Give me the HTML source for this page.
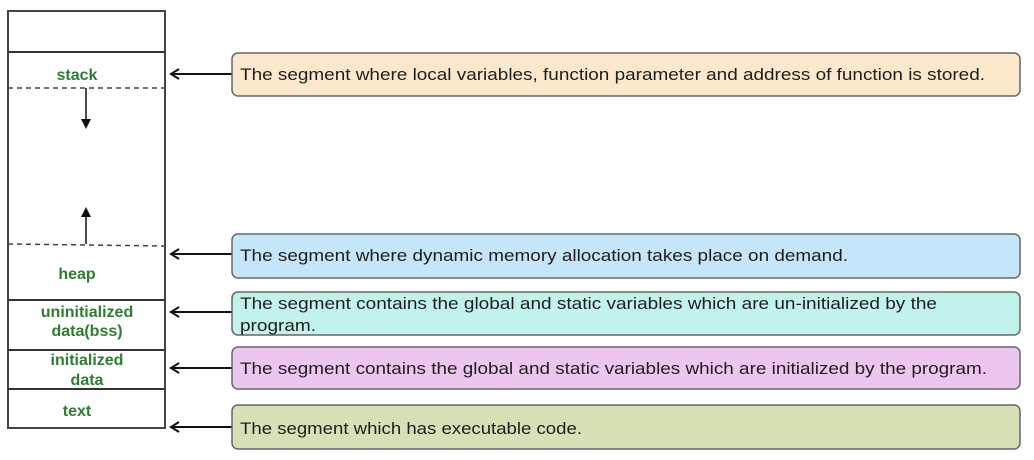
<!DOCTYPE html>
<html><head><meta charset="utf-8"><style>
html,body{margin:0;padding:0;background:#fff;width:1034px;height:460px;overflow:hidden}
svg{display:block}
.g{font-family:"Liberation Sans",sans-serif;font-weight:bold;font-size:16px;fill:#2e7d32;text-anchor:middle}
.t{font-family:"Liberation Sans",sans-serif;font-size:17px;fill:#1e1e1e}
</style></head><body>
<svg width="1034" height="460" viewBox="0 0 1034 460">
<defs>
<marker id="b" markerWidth="10" markerHeight="10" refX="5" refY="5" orient="auto" markerUnits="userSpaceOnUse"><path d="M0,0 L10,5 L0,10 Z" fill="#111"/></marker></defs>
<rect x="8" y="11" width="157" height="417" fill="#fff" stroke="#444" stroke-width="2"/>
<line x1="8" y1="52" x2="165" y2="52" stroke="#333" stroke-width="2"/>
<line x1="8" y1="300" x2="165" y2="300" stroke="#333" stroke-width="2"/>
<line x1="8" y1="350" x2="165" y2="350" stroke="#333" stroke-width="2"/>
<line x1="8" y1="389" x2="165" y2="389" stroke="#333" stroke-width="2"/>
<line x1="8" y1="88" x2="165" y2="88" stroke="#444" stroke-width="1.5" stroke-dasharray="5,4"/>
<line x1="8" y1="244" x2="165" y2="246" stroke="#444" stroke-width="1.5" stroke-dasharray="5,4"/>
<line x1="86" y1="88" x2="86" y2="124" stroke="#111" stroke-width="1.5" marker-end="url(#b)"/>
<line x1="86" y1="244" x2="86" y2="212" stroke="#111" stroke-width="1.5" marker-end="url(#b)"/>
<text class="g" x="77" y="80">stack</text>
<text class="g" x="77" y="279">heap</text>
<text class="g" x="87" y="317">uninitialized</text>
<text class="g" x="87" y="336">data(bss)</text>
<text class="g" x="87" y="365">initialized</text>
<text class="g" x="87" y="385">data</text>
<text class="g" x="77" y="416">text</text>
<g stroke="#111" stroke-width="2" fill="none">
<line x1="232" y1="74" x2="171" y2="74"/><path d="M179,69 L171,74 L179,79"/>
<line x1="232" y1="254" x2="171" y2="254"/><path d="M179,249 L171,254 L179,259"/>
<line x1="232" y1="312" x2="171" y2="312"/><path d="M179,307 L171,312 L179,317"/>
<line x1="232" y1="368" x2="171" y2="368"/><path d="M179,363 L171,368 L179,373"/>
<line x1="232" y1="427" x2="171" y2="427"/><path d="M179,422 L171,427 L179,432"/>
</g>
<g stroke="#666" stroke-width="1.5">
<rect x="232" y="53" width="788" height="43" rx="6" fill="#fbe8cd"/>
<rect x="232" y="234" width="788" height="44" rx="6" fill="#c5e5f8"/>
<rect x="232" y="292" width="788" height="43" rx="6" fill="#c2f3ea"/>
<rect x="232" y="347" width="788" height="42" rx="6" fill="#ecc6ef"/>
<rect x="232" y="405" width="788" height="44" rx="6" fill="#d6e1b8"/>
</g>
<text class="t" x="240" y="80" textLength="745" lengthAdjust="spacingAndGlyphs">The segment where local variables, function parameter and address of function is stored.</text>
<text class="t" x="240" y="261" textLength="608" lengthAdjust="spacingAndGlyphs">The segment where dynamic memory allocation takes place on demand.</text>
<text class="t" x="240" y="309" textLength="697" lengthAdjust="spacingAndGlyphs">The segment contains the global and static variables which are un-initialized by the</text>
<text class="t" x="240" y="331" textLength="76" lengthAdjust="spacingAndGlyphs">program.</text>
<text class="t" x="240" y="374" textLength="747" lengthAdjust="spacingAndGlyphs">The segment contains the global and static variables which are initialized by the program.</text>
<text class="t" x="240" y="434" textLength="342" lengthAdjust="spacingAndGlyphs">The segment which has executable code.</text>
</svg>
</body></html>
